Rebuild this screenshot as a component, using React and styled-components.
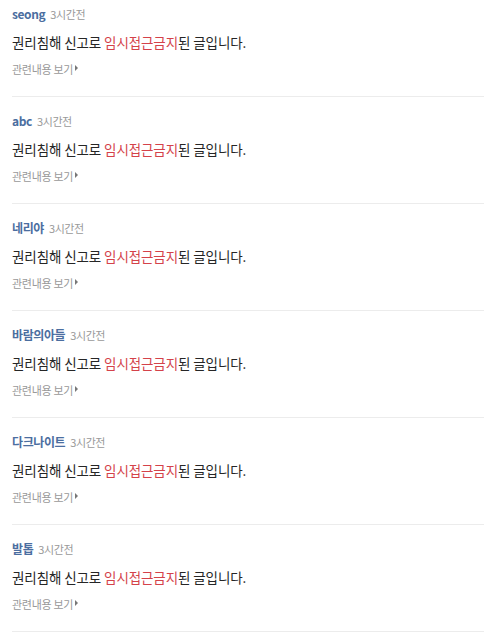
import React from "react";
import styled, { createGlobalStyle } from "styled-components";

const GlobalStyle = createGlobalStyle`
  body {
    margin: 0;
    background: #fff;
    font-family: "Noto Sans CJK KR", "Noto Sans", sans-serif;
  }
`;

const comments = [
  { id: 1, name: "seong", time: "3시간전" },
  { id: 2, name: "abc", time: "3시간전" },
  { id: 3, name: "네리야", time: "3시간전" },
  { id: 4, name: "바람의아들", time: "3시간전" },
  { id: 5, name: "다크나이트", time: "3시간전" },
  { id: 6, name: "발톱", time: "3시간전" },
];

const App = () => {
  return (
    <>
      <GlobalStyle />
      <List>
        {comments.map((c) => (
          <Item key={c.id}>
            <Meta>
              <Name>{c.name}</Name>
              <Time>{c.time}</Time>
            </Meta>
            <Message>
              권리침해 신고로 <Blocked>임시접근금지</Blocked>된 글입니다.
            </Message>
            <More>
              관련내용 보기<Arrow />
            </More>
          </Item>
        ))}
      </List>
    </>
  );
};

const List = styled.ul`
  list-style: none;
  margin: 0;
  padding: 0 1px 0 12px;
`;

const Item = styled.li`
  border-bottom: 1px solid #ececec;
  display: flex;
  flex-direction: column;
  padding: 15px 0 19px;
  &:first-child {
    padding-top: 5px;
  }
`;

const Meta = styled.div`
  display: flex;
  align-items: baseline;
  gap: 5px;
  height: 18px;
`;

const Name = styled.span`
  font-size: 12px;
  font-weight: 700;
  color: #4b6ea0;
  letter-spacing: -0.4px;
`;

const Time = styled.span`
  font-size: 11px;
  color: #999;
  letter-spacing: -0.4px;
`;

const Message = styled.p`
  margin: 10px 0 0;
  font-size: 13.5px;
  line-height: 18px;
  color: #262626;
  letter-spacing: -0.1px;
`;

const Blocked = styled.span`
  color: #d4424a;
`;

const More = styled.div`
  margin-top: 10px;
  font-size: 11px;
  line-height: 16px;
  color: #999;
  display: flex;
  align-items: flex-start;
  letter-spacing: -0.3px;
`;

const Arrow = styled.span`
  margin-left: 2px;
  margin-top: 4px;
  width: 0;
  height: 0;
  border-top: 3px solid transparent;
  border-bottom: 3px solid transparent;
  border-left: 3px solid #777;
`;

export default App;
